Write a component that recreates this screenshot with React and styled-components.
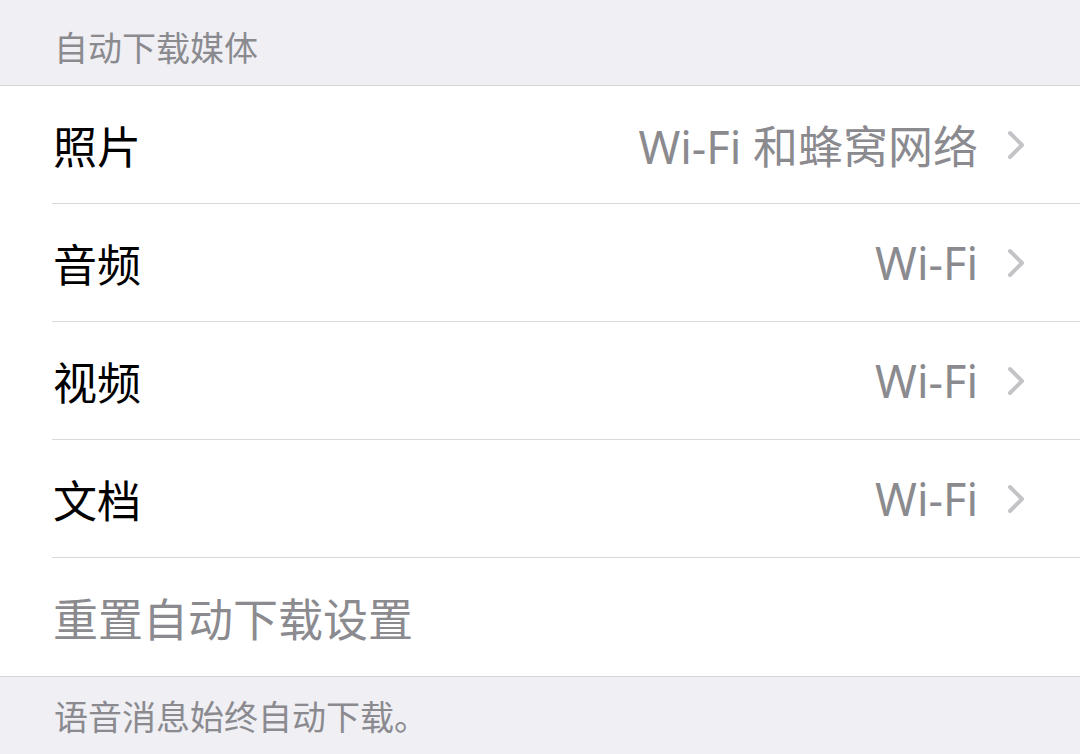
import styled, { createGlobalStyle } from "styled-components";

const GlobalStyle = createGlobalStyle`
  html, body {
    margin: 0;
    padding: 0;
    background: #efeff4;
  }
  body {
    font-family: "Noto Sans", "Noto Sans CJK SC", sans-serif;
    -webkit-font-smoothing: antialiased;
  }
`;

const Page = styled.div`
  width: 1080px;
  height: 754px;
  overflow: hidden;
  display: flex;
  flex-direction: column;
  background: #efeff4;
`;

const SectionHeader = styled.div`
  height: 86px;
  box-sizing: border-box;
  padding: 26px 0 0 54px;
  font-size: 34px;
  line-height: 44px;
  color: #8a8a8f;
  border-bottom: 1px solid #d3d3d8;
`;

const Group = styled.div`
  background: #fff;
  border-bottom: 1px solid #d3d3d8;
`;

const Row = styled.div`
  height: 118px;
  margin-left: 52px;
  box-sizing: border-box;
  display: flex;
  align-items: center;
  padding-right: 54px;
  border-bottom: ${(p) => (p.$last ? "none" : "1px solid #d9d9dc")};
`;

const Label = styled.div`
  flex: 1;
  font-size: ${(p) => (p.$muted ? "45px" : "44px")};
  color: ${(p) => (p.$muted ? "#8a8a8f" : "#000")};
  padding-left: 1px;
`;

const Value = styled.div`
  font-size: 45px;
  color: #8a8a8f;
  margin-right: 28px;
`;

const Chevron = () => (
  <svg width="20" height="30" viewBox="0 0 20 30">
    <path
      d="M4 3 L16 15 L4 27"
      fill="none"
      stroke="#c4c4c8"
      strokeWidth="4"
      strokeLinecap="round"
      strokeLinejoin="round"
    />
  </svg>
);

const Footer = styled.div`
  padding: 18px 0 0 54px;
  font-size: 34px;
  line-height: 44px;
  color: #8a8a8f;
`;

const rows = [
  { label: "照片", value: "Wi-Fi 和蜂窝网络" },
  { label: "音频", value: "Wi-Fi" },
  { label: "视频", value: "Wi-Fi" },
  { label: "文档", value: "Wi-Fi" },
];

export default function App() {
  return (
    <Page>
      <GlobalStyle />
      <SectionHeader>自动下载媒体</SectionHeader>
      <Group>
        {rows.map((r) => (
          <Row key={r.label}>
            <Label>{r.label}</Label>
            <Value>{r.value}</Value>
            <Chevron />
          </Row>
        ))}
        <Row $last>
          <Label $muted>重置自动下载设置</Label>
        </Row>
      </Group>
      <Footer>语音消息始终自动下载。</Footer>
    </Page>
  );
}
